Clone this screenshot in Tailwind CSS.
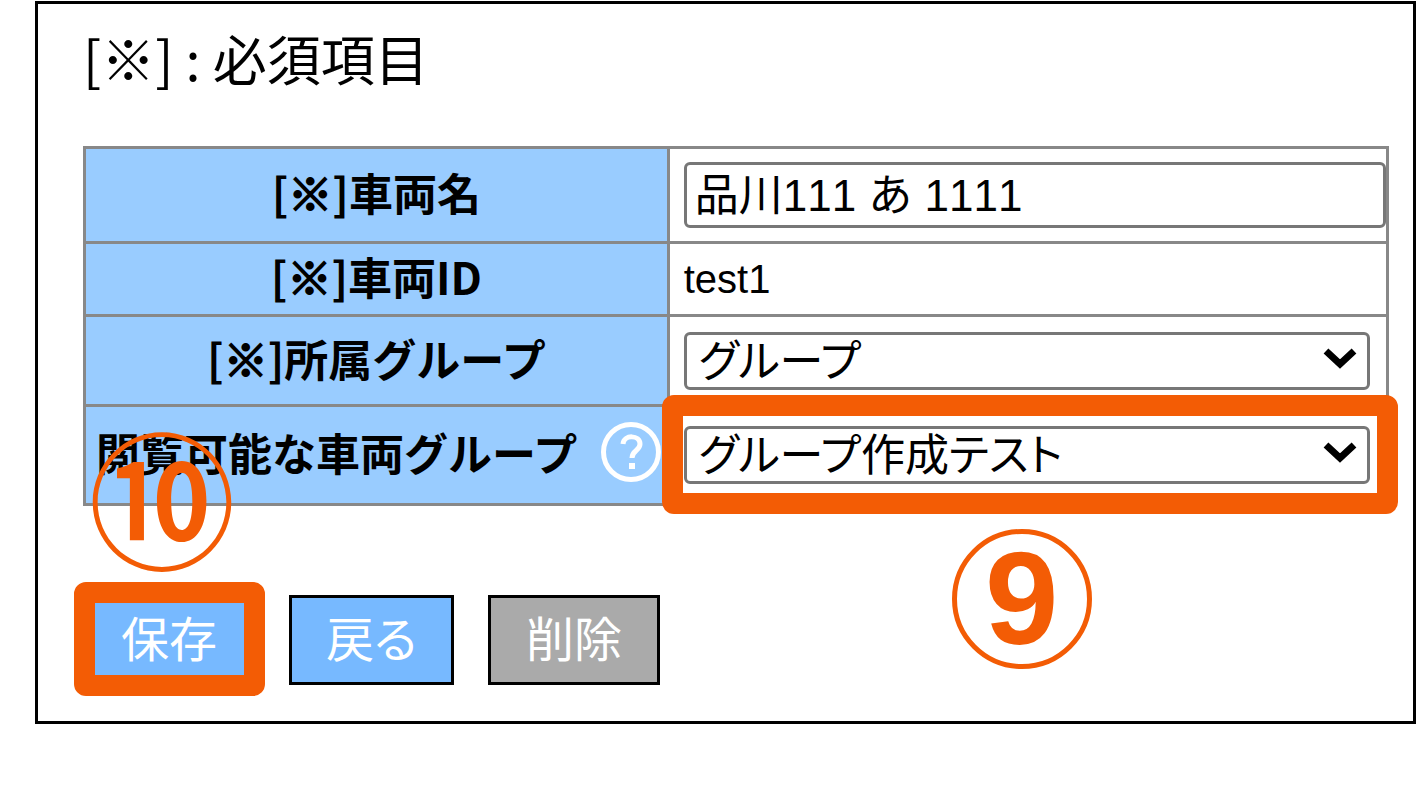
<!DOCTYPE html>
<html lang="ja">
    <head>
        <meta charset="utf-8">
        <meta name="viewport" content="width=device-width,initial-scale=1">
        <title>車両編集</title>
        <script src="https://cdn.jsdelivr.net/npm/@tailwindcss/browser@4"></script>
    </head>
    <body class="bg-white text-black font-['Noto_Sans_CJK_JP',sans-serif]">
        <main class="mt-px mr-px ml-[35px] border-3 border-black pt-5 pr-6 pb-9 pl-[45px]">
            <p class="mb-[54px] text-[54px] leading-[68px] font-normal [font-feature-settings:'palt']">[※] : 必須項目</p>
            <form>
                <table class="w-full table-fixed border-collapse">
                    <tr class="h-[95px]">
                        <th class="w-[44.8%] border-3 border-[#888] bg-[#99ccff] pb-1.5 text-[44px] leading-[52px] font-bold"><label for="name">[<span class="[-webkit-text-stroke:2px]">※</span>]車両名</label></th>
                        <td class="border-3 border-[#888] pl-3.5">
                            <input id="name" type="text" value="品川111 あ 1111" class="block h-[66px] w-full rounded-md border-3 border-[#777] bg-white px-2 pb-1.5 text-[44px] leading-[52px] font-['Liberation_Sans','Noto_Sans_CJK_JP',sans-serif] [font-kerning:none]">
                        </td>
                    </tr>
                    <tr class="h-[73px]">
                        <th class="border-3 border-[#888] bg-[#99ccff] pb-1.5 text-[44px] leading-[52px] font-bold">[<span class="[-webkit-text-stroke:2px]">※</span>]車両ID</th>
                        <td class="border-3 border-[#888] pl-3.5 text-[40px] leading-[52px] font-['Liberation_Sans','Noto_Sans_CJK_JP',sans-serif]">test1</td>
                    </tr>
                    <tr class="h-[90px]">
                        <th class="border-3 border-[#888] bg-[#99ccff] pb-1.5 text-[44px] leading-[52px] font-bold"><label for="group">[<span class="[-webkit-text-stroke:2px]">※</span>]所属グループ</label></th>
                        <td class="border-3 border-[#888] pr-4 pl-3.5">
                            <div class="relative">
                                <select id="group" class="block h-[58px] w-full appearance-none rounded-md border-3 border-[#777] bg-white px-3 pb-1.5 text-[44px] leading-[46px] font-normal [font-feature-settings:'palt']">
                                    <option>グループ</option>
                                </select>
                                <svg class="pointer-events-none absolute top-4 right-3 h-[22px] w-9" viewBox="0 0 36 22" fill="none" stroke="#000" stroke-width="7"><path d="M4 3l14 13L32 3"/></svg>
                            </div>
                        </td>
                    </tr>
                    <tr class="h-[99px]">
                        <th class="border-3 border-[#888] bg-[#99ccff] pb-1.5 text-[44px] leading-[52px] font-bold">
                            <div class="flex items-center justify-between pr-1.5 pl-2.5">
                                <label for="view-group" class="whitespace-nowrap">閲覧可能な車両グループ</label>
                                <svg class="size-[60px] shrink-0" viewBox="0 0 60 60" fill="none" stroke="#fff">
                                    <circle cx="30" cy="30" r="27.5" stroke-width="5"/>
                                    <path d="M22 22c1-10 17-9 17 0 0 7-8 6-8 14" stroke-width="5"/>
                                    <path d="M31 41v6" stroke-width="6"/>
                                </svg>
                            </div>
                        </th>
                        <td class="border-3 border-[#888] pr-4 pl-3.5">
                            <div class="relative">
                                <select id="view-group" class="block h-[58px] w-full appearance-none rounded-md border-3 border-[#777] bg-white px-3 pb-1.5 text-[44px] leading-[46px] font-normal [font-feature-settings:'palt']">
                                    <option>グループ作成テスト</option>
                                </select>
                                <svg class="pointer-events-none absolute top-4 right-3 h-[22px] w-9" viewBox="0 0 36 22" fill="none" stroke="#000" stroke-width="7"><path d="M4 3l14 13L32 3"/></svg>
                                <!-- step 9 -->
                                <div class="pointer-events-none absolute -top-[31px] -right-7 -bottom-[30px] -left-[22px] rounded-xl border-21 border-[#f35c05]"></div>
                                <span class="absolute top-[103px] left-[268px] flex size-[140px] items-center justify-center rounded-full border-5 border-[#f35c05] font-['Liberation_Sans',sans-serif] text-[132px] leading-none font-bold text-[#f35c05]">9</span>
                            </div>
                        </td>
                    </tr>
                </table>
                <div class="relative mt-[89px] flex gap-[34px]">
                    <button type="submit" class="h-[90px] w-[172px] border-3 border-black bg-[#77b9ff] pb-2 text-[48px] leading-[52px] font-normal text-white">保存</button>
                    <button type="button" class="h-[90px] w-[165px] border-3 border-black bg-[#77b9ff] pb-2 text-[48px] leading-[52px] font-normal text-white [font-feature-settings:'palt']">戻る</button>
                    <button type="button" class="h-[90px] w-[172px] border-3 border-black bg-[#aaa] pb-2 text-[48px] leading-[52px] font-normal text-white">削除</button>
                    <!-- step 10 -->
                    <div class="pointer-events-none absolute -top-[13px] -left-[9px] h-[114px] w-[191px] rounded-xl border-21 border-[#f35c05]"></div>
                    <span class="absolute -top-[171px] left-[9px] flex size-[140px] items-center justify-center text-[148px] leading-none font-medium text-[#f35c05]">⑩</span>
                </div>
            </form>
        </main>
    </body>
</html>
